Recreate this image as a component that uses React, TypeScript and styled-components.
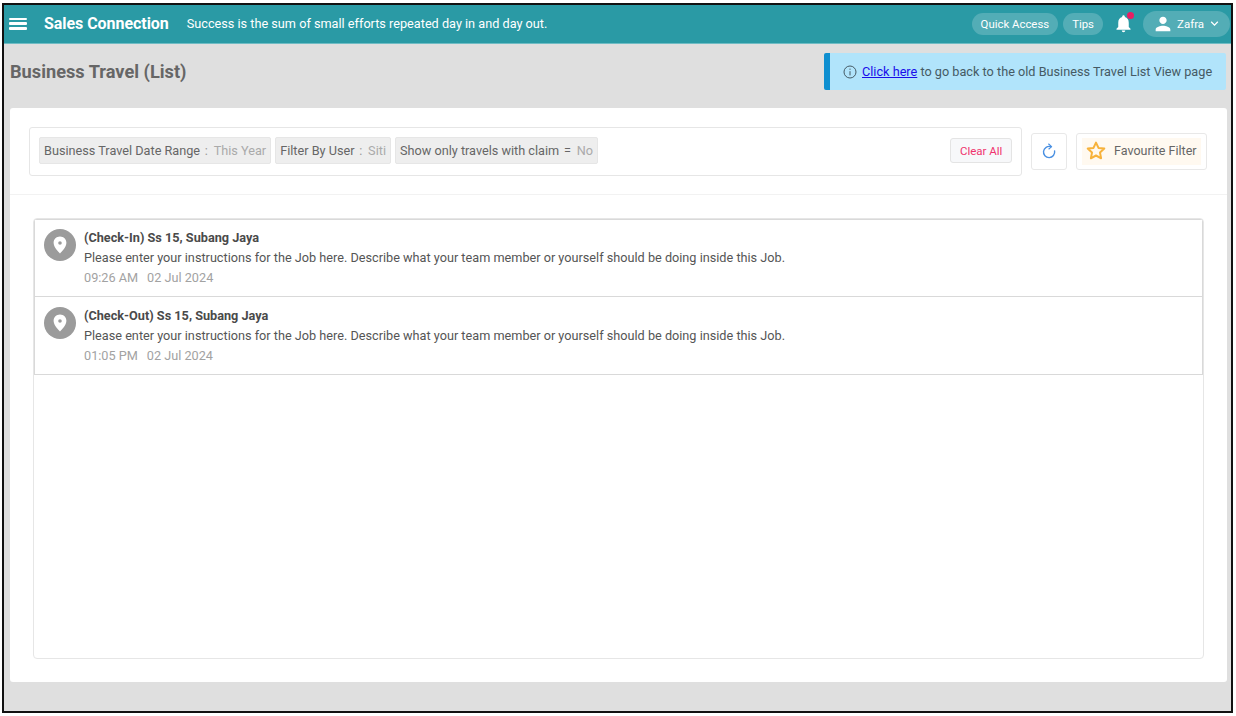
import React from "react";
import styled, { createGlobalStyle } from "styled-components";
import { MdNotifications, MdPerson, MdKeyboardArrowDown } from "react-icons/md";

const GlobalStyle = createGlobalStyle`
  html, body {
    margin: 0;
    padding: 0;
    background: #fff;
    font-family: Roboto, "Liberation Sans", sans-serif;
  }
  * { box-sizing: border-box; }
`;

const Frame = styled.div`
  width: 1231px;
  height: 710px;
  margin: 3px 0 0 2px;
  border: 2px solid #111;
  background: #dfdfdf;
  display: flex;
  flex-direction: column;
  overflow: hidden;
`;

const TopBar = styled.header`
  height: 39px;
  flex: none;
  background: #2a9aa5;
  border-bottom: 1px solid #6fbcc4;
  display: flex;
  align-items: center;
  padding: 0 1px 1px 5px;
  color: #fff;
`;

const Burger = styled.div`
  width: 18px;
  height: 12px;
  display: flex;
  flex-direction: column;
  justify-content: space-between;
  margin-right: 17px;

  span {
    display: block;
    height: 2.6px;
    background: #fff;
    border-radius: 1px;
  }
`;

const Brand = styled.div`
  font-size: 16px;
  font-weight: 700;
  letter-spacing: -0.05px;
  margin-right: 18px;
`;

const Quote = styled.div`
  font-size: 12.7px;
  flex: 1;
`;

const Pill = styled.div`
  height: 22px;
  padding: 0 9px;
  border-radius: 11px;
  background: #53adb6;
  font-size: 11.4px;
  display: flex;
  align-items: center;
  margin-right: 5px;
`;

const BellWrap = styled.div`
  position: relative;
  width: 21px;
  height: 21px;
  margin: 0 9px 0 5px;
  display: flex;
`;

const BellDot = styled.span`
  position: absolute;
  top: -1px;
  left: 14px;
  width: 7px;
  height: 7px;
  border-radius: 50%;
  background: #e91e63;
`;

const UserPill = styled.div`
  height: 26px;
  width: 87px;
  border-radius: 13px;
  background: #53adb6;
  display: flex;
  align-items: center;
  padding-left: 9px;
  font-size: 11.5px;
  gap: 3px;
`;

const TitleRow = styled.div`
  height: 64px;
  flex: none;
  display: flex;
  align-items: flex-start;
  justify-content: space-between;
  padding: 9px 5px 0 6px;
`;

const PageTitle = styled.h1`
  margin: 8px 0 0;
  font-size: 18.2px;
  font-weight: 700;
  color: #666;
`;

const Notice = styled.div`
  width: 402px;
  height: 37px;
  background: #b1e4fb;
  border-left: 6px solid #0e8fd0;
  border-radius: 2px;
  display: flex;
  align-items: center;
  gap: 5px;
  padding-left: 13px;
  font-size: 12.7px;
  color: #455a64;

  a {
    color: #1a0dea;
    text-decoration: underline;
  }
`;

const Card = styled.main`
  width: 1217px;
  height: 574px;
  margin-left: 6px;
  background: #fff;
  border-radius: 3px;
  display: flex;
  flex-direction: column;
`;

const FilterSection = styled.section`
  height: 87px;
  flex: none;
  border-bottom: 1px solid #f2f2f2;
  padding: 19px 20px 0 19px;
  display: flex;
  align-items: flex-start;
`;

const FilterBox = styled.div`
  width: 994px;
  height: 49px;
  border: 1px solid #e6e6e6;
  border-radius: 3px;
  display: flex;
  align-items: center;
  padding: 0 9px 2px 9px;
  gap: 4px;
`;

const Chip = styled.div`
  height: 27px;
  padding: 0 4px;
  background: #eee;
  border: 1px solid #e6e6e6;
  border-radius: 2px;
  font-size: 12.7px;
  color: #666;
  display: flex;
  align-items: center;
  white-space: nowrap;
`;

const ChipSep = styled.span<{ $dark?: boolean }>`
  color: ${(p) => (p.$dark ? "#666" : "#999")};
  margin: 0 5.75px 0 4.75px;
`;

const ChipValue = styled.span`
  color: #aaa;
`;

const ClearAll = styled.button`
  margin-left: auto;
  width: 62px;
  height: 25px;
  padding: 0;
  background: #f7f8fa;
  border: 1px solid #e4e4e4;
  border-radius: 3px;
  font: 400 11.5px Roboto, sans-serif;
  color: #f0336e;
`;

const IconButton = styled.button`
  width: 36px;
  height: 37px;
  margin: 6px 0 0 9px;
  padding: 0;
  background: #fff;
  border: 1px solid #e8e8e8;
  border-radius: 3px;
  display: flex;
  align-items: center;
  justify-content: center;
`;

const FavButton = styled.button`
  width: 131px;
  height: 37px;
  margin: 6px 0 0 9px;
  padding: 4px 5px;
  background: #fff;
  border: 1px solid #e8e8e8;
  border-radius: 3px;
`;

const FavInner = styled.div`
  height: 100%;
  background: #fff9f0;
  display: flex;
  align-items: center;
  gap: 8px;
  padding: 0 0 2px 4px;
  font: 400 12.5px Roboto, sans-serif;
  color: #666;
  white-space: nowrap;
`;

const ListArea = styled.section`
  flex: 1;
  padding: 23px;
  display: flex;
`;

const ListBox = styled.div`
  flex: 1;
  border: 1px solid #e6e6e6;
  border-radius: 4px;
  overflow: hidden;
`;

const Item = styled.article`
  height: 78px;
  border: 1px solid #d9d9d9;
  border-top: none;
  display: flex;
  gap: 8px;
  padding: 10px 10px 0 9px;

  &:first-child {
    border-top: 1px solid #d9d9d9;
    padding-top: 9px;
  }
`;

const Avatar = styled.div`
  width: 32px;
  height: 32px;
  flex: none;
  border-radius: 50%;
  background: #9b9b9b;
  display: flex;
  align-items: center;
  justify-content: center;
`;

const ItemBody = styled.div`
  display: flex;
  flex-direction: column;
  gap: 5px;
  font-size: 12.7px;
  line-height: 15px;
  padding-top: 1px;
`;

const ItemTitle = styled.div`
  font-weight: 700;
  color: #4a4a4a;
`;

const ItemText = styled.div`
  color: #555;
`;

const ItemTime = styled.div`
  color: #a2a2a2;

  span {
    margin-left: 9px;
  }
`;

const PinIcon = () => (
  <svg width="14" height="18" viewBox="0 0 14 18">
    <path
      fill="#fff"
      fillRule="evenodd"
      d="M7 0.5C3.3 0.5 0.6 3.3 0.6 6.8 0.6 11 5 15.6 7 17.5 9 15.6 13.4 11 13.4 6.8 13.4 3.3 10.7 0.5 7 0.5ZM7 5.2A1.8 1.8 0 1 1 7 8.8 1.8 1.8 0 1 1 7 5.2Z"
    />
  </svg>
);

const InfoIcon = () => (
  <svg width="14" height="14" viewBox="0 0 14 14" fill="none" stroke="#455a64" strokeWidth="1">
    <circle cx="7" cy="7" r="6" />
    <path d="M7 6.2V10.4" />
    <path d="M7 3.6V4.8" />
  </svg>
);

const RefreshIcon = () => (
  <svg width="16" height="17" viewBox="0 0 16 17" fill="none">
    <path d="M9.8 3.7A5.6 5.6 0 1 0 13.6 8" stroke="#4a90e2" strokeWidth="1.4" strokeLinecap="round" />
    <path d="M7.4 0.8 10.6 3.6 7.6 6.2" stroke="#4a90e2" strokeWidth="1.2" strokeLinejoin="round" />
  </svg>
);

const StarIcon = () => (
  <svg width="20" height="19" viewBox="0 0 20 19" fill="none">
    <path
      d="M10 1.6 12.5 6.9 18.3 7.6 14 11.6 15.1 17.3 10 14.5 4.9 17.3 6 11.6 1.7 7.6 7.5 6.9Z"
      stroke="#f7b23b"
      strokeWidth="2"
      strokeLinejoin="round"
    />
  </svg>
);

const travels = [
  { id: 1, title: "(Check-In) Ss 15, Subang Jaya", time: "09:26 AM", date: "02 Jul 2024" },
  { id: 2, title: "(Check-Out) Ss 15, Subang Jaya", time: "01:05 PM", date: "02 Jul 2024" },
];

const filters = [
  { label: "Business Travel Date Range", sep: ":", value: "This Year" },
  { label: "Filter By User", sep: ":", value: "Siti" },
  { label: "Show only travels with claim", sep: "=", value: "No" },
];

const App = () => (
  <Frame>
    <GlobalStyle />
    <TopBar>
      <Burger>
        <span />
        <span />
        <span />
      </Burger>
      <Brand>Sales Connection</Brand>
      <Quote>Success is the sum of small efforts repeated day in and day out.</Quote>
      <Pill>Quick Access</Pill>
      <Pill>Tips</Pill>
      <BellWrap>
        <MdNotifications size={21} />
        <BellDot />
      </BellWrap>
      <UserPill>
        <MdPerson size={22} />
        Zafra
        <MdKeyboardArrowDown size={15} />
      </UserPill>
    </TopBar>

    <TitleRow>
      <PageTitle>Business Travel (List)</PageTitle>
      <Notice>
        <InfoIcon />
        <span>
          <a href="#old">Click here</a> to go back to the old Business Travel List View page
        </span>
      </Notice>
    </TitleRow>

    <Card>
      <FilterSection>
        <FilterBox>
          {filters.map((f) => (
            <Chip key={f.label}>
              {f.label}
              <ChipSep $dark={f.sep === "="}>{f.sep}</ChipSep>
              <ChipValue>{f.value}</ChipValue>
            </Chip>
          ))}
          <ClearAll>Clear All</ClearAll>
        </FilterBox>
        <IconButton>
          <RefreshIcon />
        </IconButton>
        <FavButton>
          <FavInner>
            <StarIcon />
            Favourite Filter
          </FavInner>
        </FavButton>
      </FilterSection>

      <ListArea>
        <ListBox>
          {travels.map((t) => (
            <Item key={t.id}>
              <Avatar>
                <PinIcon />
              </Avatar>
              <ItemBody>
                <ItemTitle>{t.title}</ItemTitle>
                <ItemText>
                  Please enter your instructions for the Job here. Describe what your team member or yourself should be doing inside this Job.
                </ItemText>
                <ItemTime>
                  {t.time}
                  <span>{t.date}</span>
                </ItemTime>
              </ItemBody>
            </Item>
          ))}
        </ListBox>
      </ListArea>
    </Card>
  </Frame>
);

export default App;
